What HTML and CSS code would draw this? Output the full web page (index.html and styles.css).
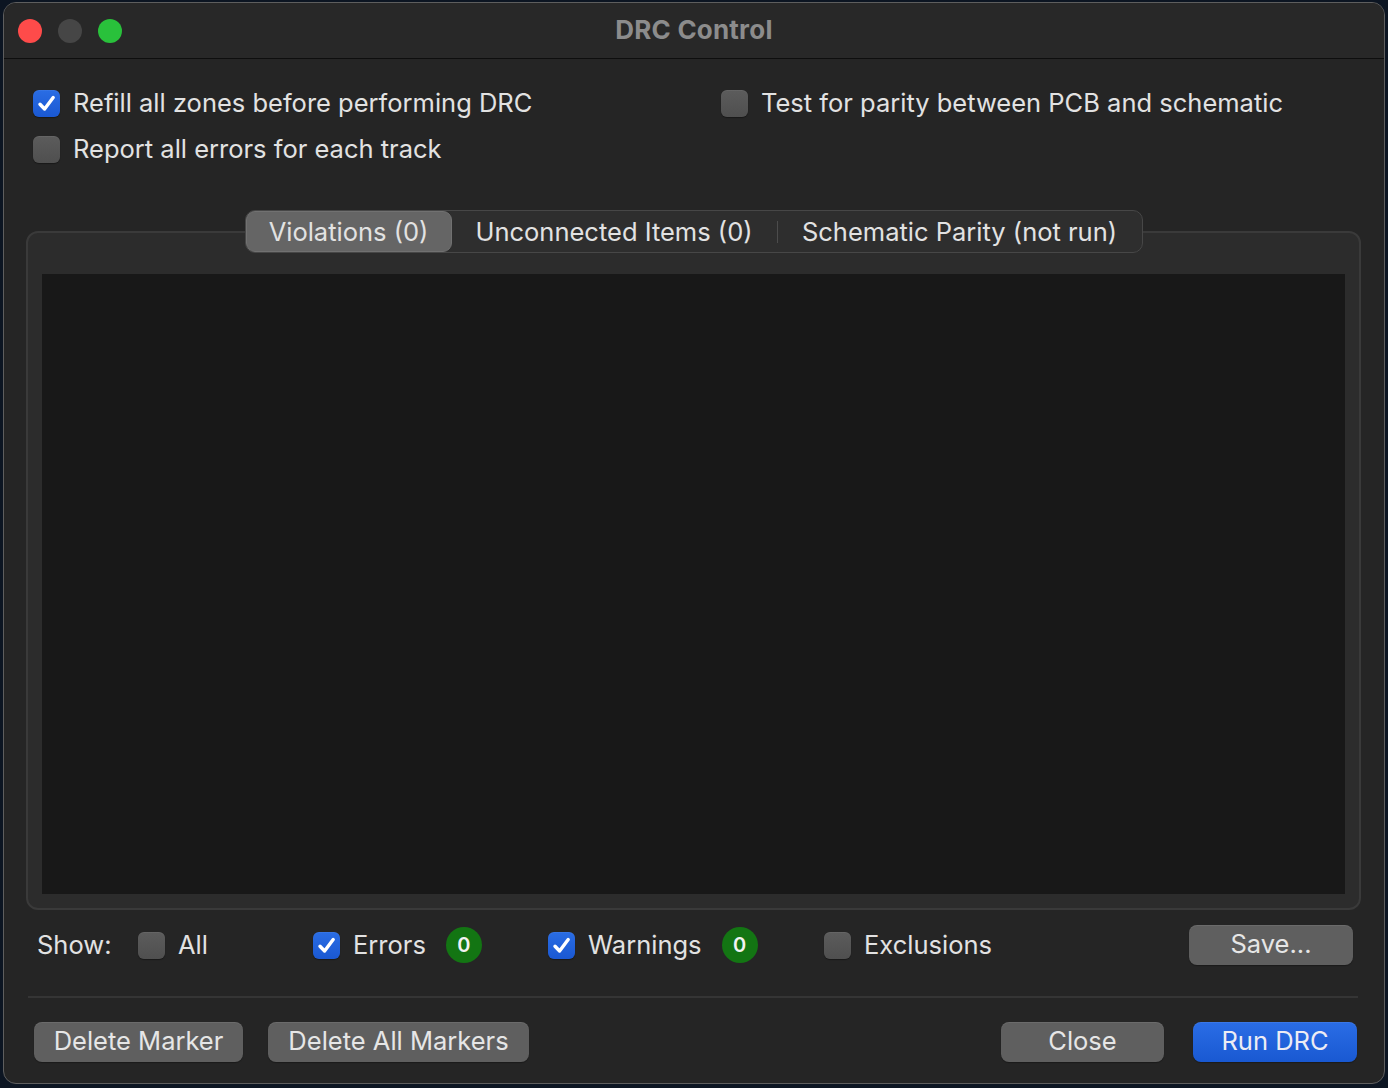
FILE: index.html
```html
<!DOCTYPE html>
<html>
<head>
<meta charset="utf-8">
<link rel="stylesheet" href="styles.css">
</head>
<body>
<div class="window">
  <div class="titlebar">
    <div class="lights">
      <span class="light red"></span>
      <span class="light gray"></span>
      <span class="light green"></span>
    </div>
    <div class="title">DRC Control</div>
    <div></div>
  </div>
  <div class="content">
    <div class="options">
      <label class="check"><span class="box on"><svg viewBox="0 0 27 27"><path d="M7 14.2 L11.6 19 L20.2 7.6"/></svg></span><span class="lbl">Refill all zones before performing DRC</span></label>
      <label class="check"><span class="box"></span><span class="lbl">Test for parity between PCB and schematic</span></label>
      <label class="check"><span class="box"></span><span class="lbl">Report all errors for each track</span></label>
    </div>
    <div class="notebook">
      <div class="tabs">
        <div class="tab t1 active">Violations (0)</div>
        <div class="tab t2">Unconnected Items (0)</div>
        <div class="tabsep"></div>
        <div class="tab t3">Schematic Parity (not run)</div>
      </div>
      <div class="panel">
        <div class="list"></div>
      </div>
    </div>
    <div class="showrow">
      <div class="showlabel">Show:</div>
      <label class="check g-all"><span class="box"></span><span class="lbl">All</span></label>
      <label class="check g-err"><span class="box on"><svg viewBox="0 0 27 27"><path d="M7 14.2 L11.6 19 L20.2 7.6"/></svg></span><span class="lbl">Errors</span><span class="badge">0</span></label>
      <label class="check g-warn"><span class="box on"><svg viewBox="0 0 27 27"><path d="M7 14.2 L11.6 19 L20.2 7.6"/></svg></span><span class="lbl">Warnings</span><span class="badge">0</span></label>
      <label class="check g-excl"><span class="box"></span><span class="lbl">Exclusions</span></label>
      <button class="btn save">Save...</button>
    </div>
    <div class="divider"></div>
    <div class="buttons">
      <button class="btn b-del">Delete Marker</button>
      <button class="btn b-delall">Delete All Markers</button>
      <div class="spacer"></div>
      <button class="btn b-close">Close</button>
      <button class="btn primary b-run">Run DRC</button>
    </div>
  </div>
</div>
</body>
</html>
```
FILE: styles.css
```css
* { box-sizing: border-box; }
html, body { margin: 0; padding: 0; }
body {
  background: #0c1522;
  width: 1388px;
  height: 1088px;
  overflow: hidden;
  font-family: "Inter", "Liberation Sans", sans-serif;
  color: #e2e2e2;
}
.window {
  margin: 2px 0 0 3px;
  width: 1382px;
  height: 1082px;
  border: 1px solid #5e5e5e;
  border-radius: 13px;
  background: #252525;
  overflow: hidden;
  display: flex;
  flex-direction: column;
}
.titlebar {
  height: 56px;
  flex: none;
  background: #282828;
  border-bottom: 1px solid #0e0e0e;
  display: grid;
  grid-template-columns: 1fr auto 1fr;
  align-items: center;
}
.lights {
  display: flex;
  gap: 16px;
  padding-left: 14px;
}
.light {
  width: 24px;
  height: 24px;
  border-radius: 50%;
  display: block;
}
.light.red { background: #fe4b4a; }
.light.gray { background: #464646; }
.light.green { background: #29c13b; }
.title {
  font-weight: 700;
  font-size: 26px;
  color: #8c8c8c;
  letter-spacing: 0.2px;
  padding-bottom: 3px;
}
.content {
  flex: 1;
  padding: 21px 23px 0 22px;
  display: flex;
  flex-direction: column;
}
.options {
  display: grid;
  grid-template-columns: 688px 1fr;
  grid-auto-rows: 46px;
  padding-left: 7px;
}
.check {
  display: flex;
  align-items: center;
  font-size: 25.5px;
  color: #e2e2e2;
  white-space: nowrap;
}
.lbl { padding-bottom: 2px; }
.box {
  width: 27px;
  height: 27px;
  border-radius: 6px;
  background: linear-gradient(#5c5c5c, #4f4f4f);
  box-shadow: inset 0 1px 0 rgba(255,255,255,0.06), 0 1px 1px rgba(0,0,0,0.35);
  margin-right: 13px;
  flex: none;
  display: flex;
}
.box.on {
  background: linear-gradient(#2a6de4, #1a58d2);
}
.box svg { width: 27px; height: 27px; }
.box path {
  fill: none;
  stroke: #fff;
  stroke-width: 3.4;
  stroke-linecap: round;
  stroke-linejoin: round;
}
.notebook {
  margin-top: 38px;
  display: flex;
  flex-direction: column;
  align-items: center;
}
.tabs {
  position: relative;
  z-index: 1;
  display: flex;
  align-items: center;
  height: 43px;
  margin-bottom: -22px;
  background: #2e2e2e;
  border: 1px solid #474747;
  border-radius: 10px;
}
.tab {
  height: 41px;
  display: flex;
  align-items: center;
  justify-content: center;
  font-size: 25.5px;
  color: #e2e2e2;
  white-space: nowrap;
  padding-bottom: 1px;
}
.tab.active {
  background: #656565;
  border: 1px solid #717171;
  border-radius: 9px;
  height: 41px;
}
.t1 { width: 206px; }
.t2 { width: 325px; }
.t3 { width: 364px; }
.tabsep {
  width: 1px;
  height: 22px;
  background: #4c4c4c;
}
.panel {
  align-self: stretch;
  height: 679px;
  background: #2c2c2c;
  border: 2px solid #3a3a3a;
  border-radius: 12px;
  padding: 41px 14px 14px 14px;
}
.list {
  height: 100%;
  background: #181818;
}
.showrow {
  margin-top: 15px;
  height: 40px;
  display: flex;
  align-items: center;
  padding: 0 8px 0 11px;
}
.showlabel {
  width: 101px;
  font-size: 25.5px;
  color: #e2e2e2;
  padding-bottom: 2px;
}
.g-all { width: 175px; }
.g-err { width: 235px; }
.g-warn { width: 276px; }
.badge {
  width: 36px;
  height: 36px;
  border-radius: 50%;
  background: #137513;
  color: #f2f2f2;
  font-size: 20px;
  font-weight: 600;
  display: flex;
  align-items: center;
  justify-content: center;
  margin-left: 20px;
}
.btn {
  font-family: inherit;
  font-size: 25.5px;
  color: #e6e6e6;
  background: #5f5f5f;
  border: none;
  border-radius: 8px;
  height: 40px;
  padding: 0 0 3px 0;
  box-shadow: inset 0 1px 0 rgba(255,255,255,0.08), 0 1px 1px rgba(0,0,0,0.3);
}
.save { margin-left: auto; width: 164px; }
.divider {
  margin: 31px 3px 0 2px;
  height: 2px;
  background: #353535;
}
.buttons {
  margin-top: 24px;
  display: flex;
  align-items: center;
  padding: 0 4px 0 8px;
}
.b-del { width: 209px; }
.b-delall { width: 261px; margin-left: 25px; }
.spacer { flex: 1; }
.b-close { width: 163px; }
.b-run { width: 164px; margin-left: 29px; }
.btn.primary {
  background: linear-gradient(#2a6de6, #1959d2);
  color: #ececf4;
}
```
